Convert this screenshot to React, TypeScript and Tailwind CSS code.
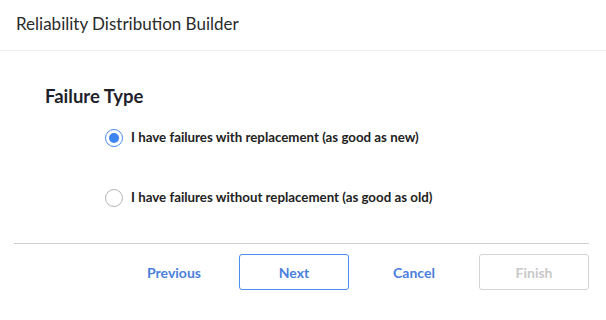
import { useState } from "react";

const options = [
  { id: "new", label: "I have failures with replacement (as good as new)" },
  { id: "old", label: "I have failures without replacement (as good as old)" },
];

function Radio({ checked }: { checked: boolean }) {
  return (
    <span
      className={`flex h-[18px] w-[18px] shrink-0 items-center justify-center rounded-full border bg-white ${
        checked ? "border-[#4a8cf0] border-[1.5px]" : "border-[#b5b5b5]"
      }`}
    >
      {checked && <span className="h-[10px] w-[10px] rounded-full bg-[#3d85f0]" />}
    </span>
  );
}

export default function App() {
  const [choice, setChoice] = useState("new");

  return (
    <div
      className="flex h-[320px] w-[606px] flex-col bg-white text-[#222]"
      style={{ fontFamily: "Lato, 'Noto Sans', sans-serif" }}
    >
      {/* Header */}
      <div className="flex h-[51px] shrink-0 items-center border-b border-[#ececec] pl-4 pb-[3px] text-[17px] text-[#2b2b2b]">
        Reliability Distribution Builder
      </div>

      {/* Body */}
      <div className="flex flex-1 flex-col px-[14px] pr-[17px]">
        <div className="pl-[31px] pt-[33px] text-[18.5px] font-bold leading-6 text-[#1f1f2b]">Failure Type</div>

        <div className="flex flex-col gap-[40px] pl-[91px] pt-[20px]">
          {options.map((o) => (
            <label
              key={o.id}
              className="flex cursor-pointer items-center gap-[8px] text-[13.3px] font-bold text-[#222]"
              onClick={() => setChoice(o.id)}
            >
              <Radio checked={choice === o.id} />
              <span>{o.label}</span>
            </label>
          ))}
        </div>

        <div className="mt-auto border-t border-[#cfcfcf]" />

        {/* Footer buttons */}
        <div className="flex justify-end gap-[10px] pt-[10px] pb-[30px] text-[14px] font-bold">
          <button className="h-9 w-[110px] rounded-[3px] text-[#4a7fdc]">Previous</button>
          <button className="h-9 w-[110px] rounded-[3px] border border-[#4a8cf0] text-[#4a7fdc]">Next</button>
          <button className="h-9 w-[110px] rounded-[3px] text-[#4a7fdc]">Cancel</button>
          <button disabled className="h-9 w-[110px] rounded-[3px] border border-[#d4d4d4] text-[#c8c8c8]">
            Finish
          </button>
        </div>
      </div>
    </div>
  );
}
